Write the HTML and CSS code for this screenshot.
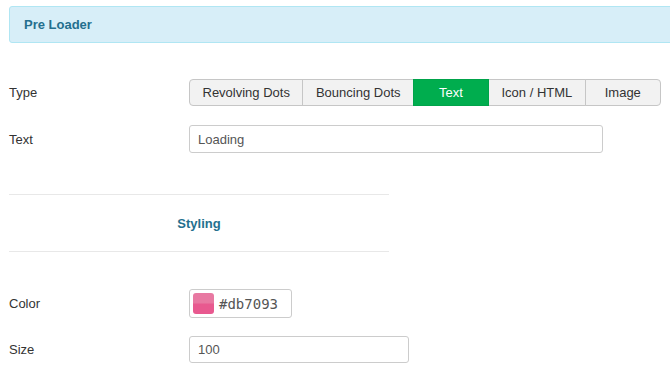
FILE: index.html
```html
<!DOCTYPE html>
<html lang="en">
<head>
  <meta charset="UTF-8" />
  <title>Pre Loader</title>
  <link rel="stylesheet" href="styles.css">
</head>
<body>

  <!-- Cabecera del panel -->
  <div class="panel-heading">Pre Loader</div>

  <div class="form">
    <div class="row row-type">
      <label class="label">Type</label>
      <div class="btn-group">
        <button class="btn">Revolving Dots</button>
        <button class="btn">Bouncing Dots</button>
        <button class="btn active">Text</button>
        <button class="btn">Icon / HTML</button>
        <button class="btn">Image</button>
      </div>
    </div>

    <div class="row row-text">
      <label class="label">Text</label>
      <input class="input input-text" type="text" value="Loading">
    </div>

    <!-- Separador de estilos -->
    <div class="section">
      <h4>Styling</h4>
    </div>

    <div class="row row-color">
      <label class="label">Color</label>
      <div class="color-box">
        <span class="swatch"></span>
        <span class="hex">#db7093</span>
      </div>
    </div>

    <div class="row row-size">
      <label class="label">Size</label>
      <input class="input input-size" type="text" value="100">
    </div>
  </div>

</body>
</html>
```

FILE: styles.css
```css
body {
  margin: 0;
  padding: 0;
  background: #ffffff;
  font-family: "Liberation Sans", Arial, sans-serif;
  font-size: 13px;
  color: #333333;
  overflow: hidden;
}

.panel-heading {
  margin: 6px -10px 0 9px;
  height: 35px;
  line-height: 35px;
  padding-left: 14px;
  background: #d7eef8;
  border: 1px solid #b0e6f3;
  border-radius: 3px;
  color: #246f8e;
  font-weight: bold;
  font-size: 13px;
}

.form {
  padding-left: 9px;
}

.row {
  display: flex;
  align-items: center;
}

.label {
  width: 180px;
  flex-shrink: 0;
}

.row-type {
  margin-top: 36px;
}

.btn-group {
  display: flex;
}

.btn {
  height: 27px;
  min-width: 76px;
  padding: 0 12.5px;
  margin: 0;
  margin-left: -1px;
  background: #f2f2f2;
  border: 1px solid #c6c6c6;
  font-family: inherit;
  font-size: 13px;
  color: #333333;
}

.btn:first-child {
  margin-left: 0;
  border-radius: 4px 0 0 4px;
}

.btn:last-child {
  border-radius: 0 4px 4px 0;
}

.btn.active {
  background: #00ad4e;
  border-color: #00a34a;
  color: #ffffff;
  position: relative;
}

.input {
  box-sizing: border-box;
  height: 28px;
  padding: 0 8px;
  border: 1px solid #cccccc;
  border-radius: 3px;
  font-family: inherit;
  font-size: 13px;
  color: #555555;
  margin: 0;
}

.row-text {
  margin-top: 19px;
}

.input-text {
  width: 414px;
}

.section {
  width: 380px;
  margin-top: 41px;
  border-top: 1px solid #e8e8e8;
  border-bottom: 1px solid #e8e8e8;
  height: 56px;
  display: flex;
  align-items: center;
  justify-content: center;
}

.section h4 {
  margin: 0;
  font-size: 13px;
  color: #246f8e;
}

.row-color {
  margin-top: 37px;
}

.color-box {
  box-sizing: border-box;
  width: 103px;
  height: 29px;
  border: 1px solid #cccccc;
  border-radius: 3px;
  display: flex;
  align-items: center;
  padding-left: 3px;
}

.swatch {
  width: 21px;
  height: 21px;
  border-radius: 3px;
  background: linear-gradient(#e879a2 0 45%, #e8598f 55% 100%);
}

.hex {
  margin-left: 5px;
  font-family: "DejaVu Sans Mono", monospace;
  font-size: 14px;
  color: #555555;
}

.row-size {
  margin-top: 18px;
}

.input-size {
  width: 220px;
  height: 27px;
}
```
